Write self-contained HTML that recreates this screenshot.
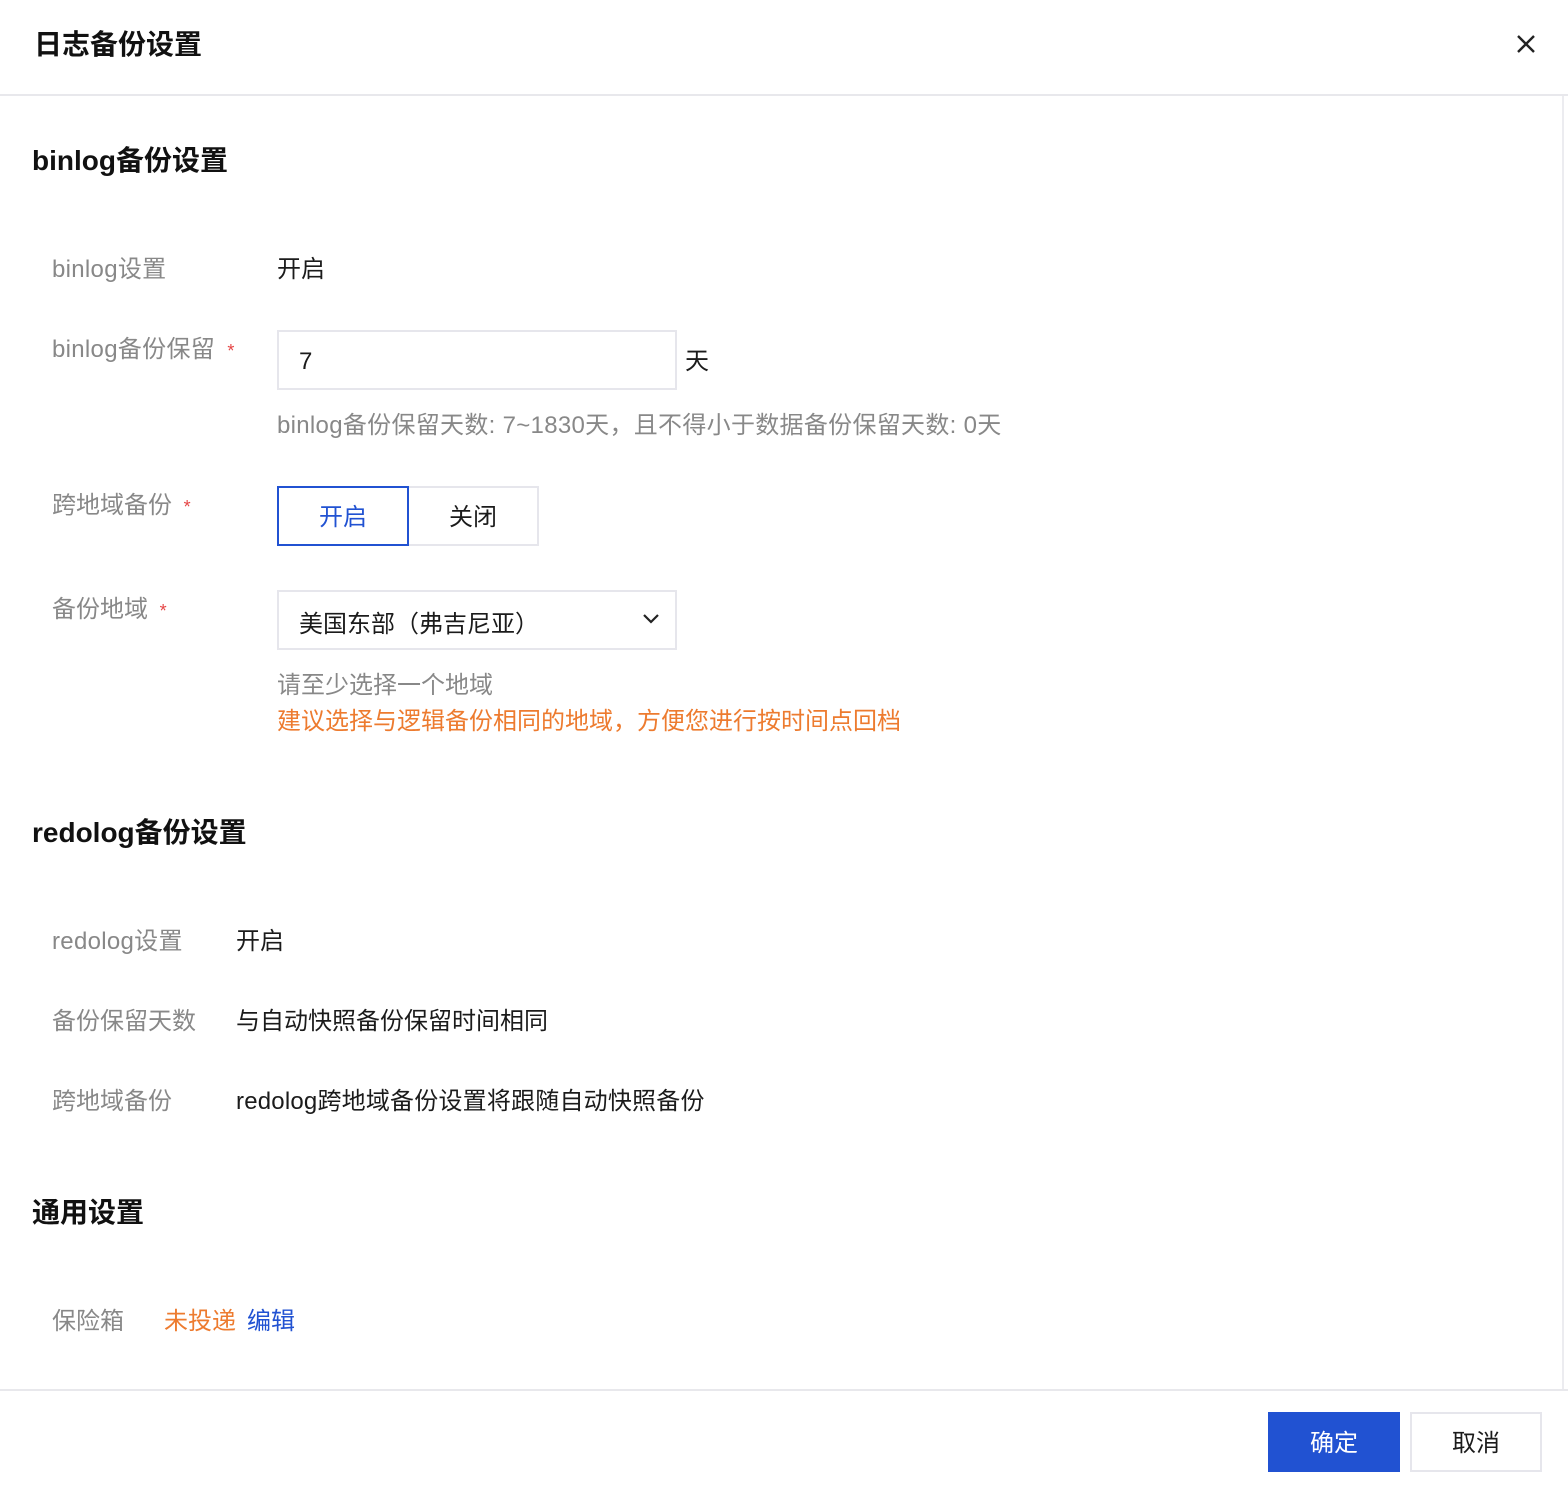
<!DOCTYPE html>
<html><head><meta charset="utf-8"><style>
*{margin:0;padding:0;box-sizing:border-box}
body{width:1568px;height:1486px;background:#fff;position:relative;overflow:hidden;font-family:"Liberation Sans","Noto Sans CJK SC",sans-serif;color:#1b1b1b}
.a{position:absolute;white-space:nowrap;line-height:1}
.t{font-size:24px}
.g{color:#888;}
.h{font-size:28px;font-weight:bold;color:#111}
.r{color:#e54545;font-size:18px}
.o{color:#ed7b2f}
.b{color:#2152d2}
.box{position:absolute;border:2px solid #e6e6ec;background:#fff}
</style></head><body>
<div class="a h" style="left:34px;top:31px">日志备份设置</div>
<svg class="a" style="left:1515px;top:33px" width="22" height="22" viewBox="0 0 22 22"><path d="M3 3L19 19M19 3L3 19" stroke="#222" stroke-width="2.4"/></svg>
<div style="position:absolute;left:0;top:94px;width:1568px;height:2px;background:#e8e8ec"></div>
<div style="position:absolute;left:1562px;top:96px;width:2px;height:1294px;background:#ececf0"></div>

<div class="a h" style="left:32px;top:147px">binlog备份设置</div>
<div class="a t g" style="left:52px;top:258px;letter-spacing:0.3px">binlog设置</div>
<div class="a t" style="left:277px;top:258px">开启</div>

<div class="a t g" style="left:52px;top:338px;letter-spacing:0.3px">binlog备份保留 <span class="r">&nbsp;*</span></div>
<div class="box" style="left:277px;top:330px;width:400px;height:60px"></div>
<div class="a t" style="left:299px;top:350px">7</div>
<div class="a t" style="left:685px;top:350px">天</div>
<div class="a t g" style="left:277px;top:414px;letter-spacing:0.3px">binlog备份保留天数: 7~1830天，且不得小于数据备份保留天数: 0天</div>

<div class="a t g" style="left:52px;top:494px">跨地域备份 <span class="r">&nbsp;*</span></div>
<div class="box" style="left:407px;top:486px;width:132px;height:60px"></div>
<div style="position:absolute;left:277px;top:486px;width:132px;height:60px;border:2px solid #2152d2"></div>
<div class="a t b" style="left:319px;top:506px">开启</div>
<div class="a t" style="left:449px;top:506px">关闭</div>

<div class="a t g" style="left:52px;top:598px">备份地域 <span class="r">&nbsp;*</span></div>
<div class="box" style="left:277px;top:590px;width:400px;height:60px"></div>
<div class="a t" style="left:299px;top:613px">美国东部（弗吉尼亚）</div>
<svg class="a" style="left:642px;top:613px" width="18" height="12" viewBox="0 0 18 12"><path d="M2 2L9 9L16 2" stroke="#222" stroke-width="2.2" fill="none"/></svg>
<div class="a t g" style="left:277px;top:674px">请至少选择一个地域</div>
<div class="a t o" style="left:277px;top:710px">建议选择与逻辑备份相同的地域，方便您进行按时间点回档</div>

<div class="a h" style="left:32px;top:819px">redolog备份设置</div>
<div class="a t g" style="left:52px;top:930px;letter-spacing:0.3px">redolog设置</div>
<div class="a t" style="left:236px;top:930px">开启</div>
<div class="a t g" style="left:52px;top:1010px">备份保留天数</div>
<div class="a t" style="left:236px;top:1010px">与自动快照备份保留时间相同</div>
<div class="a t g" style="left:52px;top:1090px">跨地域备份</div>
<div class="a t" style="left:236px;top:1090px;letter-spacing:0.2px">redolog跨地域备份设置将跟随自动快照备份</div>

<div class="a h" style="left:32px;top:1199px">通用设置</div>
<div class="a t g" style="left:52px;top:1310px">保险箱</div>
<div class="a t o" style="left:164px;top:1310px">未投递</div>
<div class="a t b" style="left:247px;top:1310px">编辑</div>

<div style="position:absolute;left:0;top:1389px;width:1568px;height:2px;background:#e8e8ec"></div>
<div style="position:absolute;left:1268px;top:1412px;width:132px;height:60px;background:#2152d2"></div>
<div class="a t" style="left:1310px;top:1432px;color:#fff">确定</div>
<div class="box" style="left:1410px;top:1412px;width:132px;height:60px"></div>
<div class="a t" style="left:1452px;top:1432px">取消</div>
</body></html>
